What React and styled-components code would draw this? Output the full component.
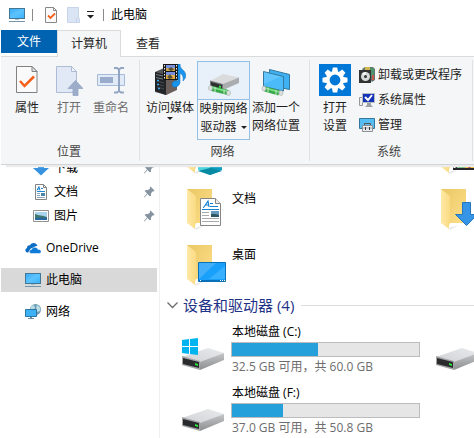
import React from 'react';
import styled, { createGlobalStyle, css } from 'styled-components';

const GlobalStyle = createGlobalStyle`
  * { box-sizing: border-box; }
  body {
    margin: 0;
    background: #fff;
    color: #000;
    font: 12px/18px "Open Sans", "Noto Sans CJK SC", sans-serif;
    overflow: hidden;
  }
  button { font: inherit; color: inherit; border: 0; background: none; padding: 0; margin: 0; }
  svg { display: block; flex: none; }
`;

/* ---------- window frame ---------- */

const Window = styled.div`
  display: flex;
  flex-direction: column;
  height: 100vh;
  padding-left: 1px;
  overflow: hidden;
`;

const TitleBar = styled.header`
  display: flex;
  align-items: center;
  flex: none;
  height: 30px;
  padding-left: 8px;
`;

const QuickButton = styled.button`
  display: flex;
  justify-content: center;
  width: ${(p) => (p.$narrow ? 12 : 22)}px;
`;

const TitleRule = styled.span`
  width: 1px;
  height: 12px;
  margin: 0 7px;
  background: #8a8a8a;
`;

const TitleText = styled.h1`
  margin: 0;
  font-size: 12px;
  font-weight: 400;
`;

const TabBar = styled.nav`
  display: flex;
  flex: none;
  height: 27px;
  margin-bottom: -1px;
  position: relative;
  z-index: 1;
`;

const Tab = styled.button`
  height: 27px;
  padding: 0 15px;
  color: #262626;
  ${(p) => p.$kind === 'file' && css`
    height: 23px;
    padding: 0 16px;
    color: #fff;
    background: #0063b1;
  `}
  ${(p) => p.$kind === 'active' && css`
    border: 1px solid #dadbdc;
    border-bottom: 0;
    background: #f5f6f7;
    padding: 0 13px;
  `}
`;

/* ---------- ribbon ---------- */

const Ribbon = styled.section`
  display: flex;
  flex: none;
  background: #f5f6f7;
  border-top: 1px solid #dadbdc;
  border-bottom: 1px solid #d2d4d6;
  padding: 3px 0;
  position: relative;
  box-shadow: 4px 3px 1px -1px #ececec;
`;

const Group = styled.div`
  display: flex;
  flex-direction: column;
  box-sizing: content-box;
  padding: 1px 7px 0 ${(p) => p.$inset}px;
  border-right: 1px solid #e0e2e3;
`;

const GroupBody = styled.div`
  display: flex;
  align-items: flex-start;
  height: 82px;
`;

const GroupTitle = styled.div`
  text-align: center;
  color: #444;
`;

const BigButton = styled.button`
  display: flex;
  flex-direction: column;
  align-items: center;
  width: ${(p) => p.$width}px;
  padding-top: 3px;
  color: #1e1e1e;
  white-space: nowrap;
  &:disabled { color: #6d6d6d; }
`;

const Split = styled.div`
  display: flex;
  flex-direction: column;
  width: 53px;
  height: 79px;
  border: 1px solid #92c0e8;
`;

const SplitTop = styled.button`
  display: flex;
  justify-content: center;
  height: 38px;
  padding-top: 2px;
  background: #e8f1fa;
  border-bottom: 1px solid #92c0e8;
`;

const SplitLabel = styled.button`
  display: flex;
  flex-direction: column;
  align-items: center;
  justify-content: flex-start;
  flex: 1;
  white-space: nowrap;
  color: #1e1e1e;
`;

const LabelLine = styled.span`
  display: flex;
  align-items: center;
  gap: 4px;
`;

const Label = styled.span`
  display: block;
  margin-top: 3px;
`;

const MenuArrow = styled.span`
  border: 3px solid transparent;
  border-top-color: #1e1e1e;
  border-bottom: 0;
`;

const SmallList = styled.div`
  display: flex;
  flex-direction: column;
  gap: 7px;
  padding: 5px 3px 0 2px;
`;

const SmallButton = styled.button`
  display: flex;
  align-items: center;
  gap: 3px;
  color: #1e1e1e;
  white-space: nowrap;
`;

/* ---------- explorer ---------- */

const Explorer = styled.div`
  display: flex;
  flex: 1;
  min-height: 0;
  overflow: hidden;
`;

const Sidebar = styled.nav`
  flex: none;
  width: 159px;
  margin-top: -9px;
  border-right: 1px solid #f0f0f0;
`;

const NavGroup = styled.div`
  margin-bottom: 8px;
`;

const NavLink = styled.a`
  display: flex;
  align-items: center;
  gap: 5px;
  height: 24px;
  margin-right: 2px;
  padding: 0 2px 0 ${(p) => (p.$nested ? 32 : 24)}px;
  color: #000;
  text-decoration: none;
  background: ${(p) => (p.$selected ? '#d9d9d9' : 'transparent')};
`;

const NavText = styled.span`
  flex: 1;
`;

const Main = styled.main`
  flex: 1;
  min-width: 0;
  margin-top: -40px;
  overflow: hidden;
`;

const Tiles = styled.div`
  display: grid;
  grid-template-columns: repeat(2, 254px);
  padding-left: 23px;
`;

const Folder = styled.div`
  display: flex;
  height: 56px;
  padding-top: 4px;
  gap: 1px;
`;

const FolderName = styled.span`
  padding-top: 5px;
`;

const SectionHead = styled.h2`
  display: flex;
  align-items: center;
  gap: 5px;
  height: 26px;
  margin: 0;
  padding: 0 0 2px 7px;
  color: #1e3287;
  font-size: 15px;
  font-weight: 400;
  line-height: 24px;
  white-space: nowrap;
  &::after {
    content: '';
    flex: 1;
    height: 1px;
    margin-left: 2px;
    background: #dedede;
  }
`;

const Drive = styled.div`
  display: flex;
  height: 61px;
  padding-top: 4px;
  margin-left: -3px;
`;

const DriveInfo = styled.div`
  width: 189px;
  margin-left: 5px;
`;

const DriveName = styled.div`
  padding-left: 1px;
`;

const Meter = styled.div`
  height: 15px;
  margin: 1px 0;
  border: 1px solid #bcbcbc;
  background: #e6e6e6;
`;

const MeterFill = styled.div`
  height: 100%;
  background: #26a0da;
`;

const DriveSpace = styled.div`
  padding-left: 1px;
  color: #6d6d6d;
  white-space: nowrap;
`;

/* ---------- icons ---------- */

const MonitorIcon = () => (
  <svg width="16" height="16" viewBox="0 0 16 16">
    <defs>
      <linearGradient id="screen" x1="0" y1="0" x2="1" y2="1">
        <stop offset="0" stopColor="#3aa9f5" />
        <stop offset=".5" stopColor="#5cc4ff" />
        <stop offset="1" stopColor="#38b0fb" />
      </linearGradient>
    </defs>
    <rect x=".5" y="1.5" width="15" height="10" fill="url(#screen)" stroke="#427796" />
    <path d="M6 12h4v1H6z" fill="#a9c0cc" />
    <path d="M0 14h16v1H0z" fill="#7595a8" />
  </svg>
);

const CheckDocIcon = () => (
  <svg width="22" height="32" viewBox="0 0 22 32">
    <path d="M.5 2.500h15.500l5 5v21H.5z" fill="#fafafa" stroke="#818181" />
    <path d="M16 2.500v5h5z" fill="#e4e4e4" stroke="#818181" />
    <path d="M4 17l4.500 5L18 12.500" fill="none" stroke="#f4601a" strokeWidth="2.500" />
  </svg>
);

const SmallCheckIcon = () => (
  <svg width="12" height="16" viewBox="0 0 12 16">
    <path d="M.5.5h8l3 3v12H.5z" fill="#fafafa" stroke="#888" />
    <path d="M8.500.5v3h3" fill="none" stroke="#888" />
    <path d="M3 8.500l2.500 2.500L10 6.500" fill="none" stroke="#f4601a" strokeWidth="1.800" />
  </svg>
);

const SmallBlankIcon = () => (
  <svg width="13" height="16" viewBox="0 0 13 16">
    <path d="M.5.5h11v10l1 1v4H.5z" fill="#d9e4f5" stroke="#c8d4e9" />
    <path d="M9.500 15v-4h2" fill="none" stroke="#c8d4e9" />
  </svg>
);

const CustomizeIcon = () => (
  <svg width="7" height="8" viewBox="0 0 7 8">
    <path d="M0 0h7v1H0zM0 4h7L3.500 7.500z" fill="#222" />
  </svg>
);

const OpenIcon = () => (
  <svg width="28" height="32" viewBox="0 0 28 32">
    <path d="M1.500 2.500h15l5 5v21h-20z" fill="#e1e9f6" stroke="#adbbd4" />
    <path d="M16.500 2.500v5h5z" fill="#f2f5fa" stroke="#adbbd4" />
    <path d="M20.500 16.500l7.500 8h-5v7h-5v-7h-5z" fill="#9dadc9" stroke="#8e9fbe" strokeWidth=".7" />
  </svg>
);

const RenameIcon = () => (
  <svg width="28" height="32" viewBox="0 0 28 32">
    <path d="M.5 10.500h27v11H.5z" fill="#e1ebf8" stroke="#a7bad8" />
    <path d="M3 13h13v6H3z" fill="#9aaccb" />
    <path d="M17 4h3l2 1.500L24 4h3M17 28.500h3l2-1.500 2 1.500h3M22 5v23" fill="none" stroke="#92a5c3" strokeWidth="2" />
  </svg>
);

const MediaIcon = () => (
  <svg width="32" height="32" viewBox="0 0 32 32">
    <path d="M1 8l9-4 13 3v18l-11 6-11-3z" fill="#55575a" />
    <path d="M12 11l11-3v18l-11 5z" fill="#6b605c" />
    <path d="M1 8l11 3v20L1 27z" fill="#222528" />
    <path d="M2 10.500l9 2M2 13.500l9 2" stroke="#777d82" strokeWidth="1" />
    <path d="M3 17l7 2M3 20l7 2M3 23l7 2" stroke="#45494d" />
    <path d="M3 16.500h2M3 20.500h2M4 24.500h2" stroke="#3ba8f0" strokeWidth="1.500" />
    <path d="M9 0h15v16H9z" fill="#171717" />
    <path d="M12 1h9v6h-9z" fill="#c9a552" />
    <path d="M12 8h9v7h-9z" fill="#e8ae42" />
    <path d="M12 1h9v3h-9zM12 8h9v3h-9z" fill="#7a91df" />
    <path d="M14 5l3-2 3 2.500-3 1.500zM13 13l3-3 3 4-4 1z" fill="#55513b" />
    <path d="M10.500 1v14M22.500 1v14" stroke="#eee" strokeDasharray="1.500 1.500" />
    <path d="M24 0h2c0 4 2 5 4 7 3 4 2 7-1 10 .5-4 0-6-3-8v9c0 5-7 7-8 3-.5-3 3-5 6-4z" fill="#1b94ed" stroke="#0870bf" strokeWidth=".5" />
  </svg>
);

const MapDriveIcon = () => (
  <svg width="32" height="32" viewBox="0 0 32 32">
    <path d="M2 17l13-7 16 3.500-15 7z" fill="#dadbdd" />
    <path d="M15 20l16-6.500v5.500l-16 7z" fill="#aaacae" />
    <path d="M2 16.500l13 3.500v6L2 22z" fill="#77797b" />
    <path d="M3 18l11 3v4L3 21.500z" fill="#2d2f30" />
    <path d="M11 21.500l2 .5v2l-2-.5z" fill="#3fe34e" />
    <path d="M4 24.500l16 4" stroke="#3aa94a" strokeWidth="5" />
    <path d="M4 23.500l16 4" stroke="#7be488" strokeWidth="1.500" />
    <path d="M7 23v5M16 25.500v5" stroke="#c9e5cd" strokeWidth="1" />
    <ellipse cx="2.500" cy="24" rx="2" ry="2.500" fill="#dce1de" stroke="#9aa39e" strokeWidth=".5" />
    <ellipse cx="20.500" cy="29" rx="2" ry="2.500" fill="#dce1de" stroke="#9aa39e" strokeWidth=".5" />
  </svg>
);

const AddPlaceIcon = () => (
  <svg width="30" height="32" viewBox="0 0 30 32">
    <path d="M8.500 5.500l20 5v15l-20-4z" fill="#3fb0f2" stroke="#34799d" />
    <path d="M2.500 7.500l20 5v14.500l-20-4.500z" fill="#4bbbfa" stroke="#34799d" />
    <path d="M3 8.300l17 4.200L3 20z" fill="#79d0ff" opacity=".5" />
    <path d="M4 25l14 4" stroke="#3aa94a" strokeWidth="5" />
    <path d="M4 24l14 4" stroke="#7be488" strokeWidth="1.500" />
    <path d="M7 23.500v5M15 26v5" stroke="#c9e5cd" />
    <ellipse cx="3" cy="24.500" rx="2" ry="2.500" fill="#dce1de" stroke="#9aa39e" strokeWidth=".5" />
    <ellipse cx="20" cy="29" rx="2" ry="2.500" fill="#dce1de" stroke="#9aa39e" strokeWidth=".5" />
  </svg>
);

const teeth = [0, 45, 90, 135, 180, 225, 270, 315];

const GearIcon = () => (
  <svg width="32" height="32" viewBox="0 0 32 32">
    <path d="M0 0h32v32H0z" fill="#0078d7" />
    <g fill="#fff">
      {teeth.map((angle) => (
        <path key={angle} d="M13.800 3.500h4.400l1 5h-6.400z" transform={`rotate(${angle} 16 16)`} />
      ))}
    </g>
    <circle cx="16" cy="16" r="7.200" fill="none" stroke="#fff" strokeWidth="3.600" />
  </svg>
);

const UninstallIcon = () => (
  <svg width="16" height="18" viewBox="0 0 16 18">
    <path d="M3 3l3-2h8l2 2v11l-3 2z" fill="#63746d" />
    <path d="M6 1h5v3H6z" fill="#d0b64f" />
    <path d="M11 2h4v8h-3z" fill="#4d936b" />
    <path d="M13 9h2v5h-2z" fill="#c35b4b" />
    <path d="M0 4h12v13H0z" fill="#333" />
    <circle cx="6.500" cy="10.500" r="4.500" fill="#d7dad9" />
    <path d="M6 10l-3-3 4-1z" fill="#fff" />
    <circle cx="6.500" cy="10.500" r="1.500" fill="#333" />
  </svg>
);

const SystemIcon = () => (
  <svg width="16" height="18" viewBox="0 0 16 18">
    <path d="M.5 6.500h3v8h-3z" fill="#eee" stroke="#92979a" />
    <path d="M3.500 2.500h12v9h-12z" fill="#1533b9" stroke="#b7bcc2" />
    <path d="M6 6l3 3 4-5" fill="none" stroke="#fff" strokeWidth="2" />
    <path d="M8 12h4v2l2 2H6l2-2z" fill="#9ba0a4" />
  </svg>
);

const ManageIcon = () => (
  <svg width="16" height="18" viewBox="0 0 16 18">
    <path d="M.5 2.500h15v10H.5z" fill="#56bdf3" stroke="#34779d" />
    <path d="M5.500 9V7.500h6V9" fill="none" stroke="#555" />
    <path d="M3.500 9.500h10v6h-10z" fill="#ebedee" stroke="#8b9194" />
    <path d="M4 12h9" stroke="#a2a7aa" />
    <path d="M6 11h1v3H6zM10 11h1v3h-1z" fill="#34383a" />
  </svg>
);

const PinIcon = () => (
  <svg width="11" height="12" viewBox="0 0 11 12">
    <path d="M6.500.500l4 4-1 1H8.500L7 7.500v2l-1 1L3.500 8 .5 11.500 0 11l3-3.500L.800 5l1-1h2.200L6 2.500V1z" fill="#8594a0" />
  </svg>
);

const DownloadIcon = () => (
  <svg width="16" height="16" viewBox="0 0 16 16">
    <path d="M5 0h6v8h5l-8 7.500L0 8h5z" fill="#3793df" />
  </svg>
);

const DocumentIcon = () => (
  <svg width="16" height="16" viewBox="0 0 16 16">
    <path d="M2.500.5h8l3 3v12h-11z" fill="#fff" stroke="#848484" />
    <path d="M10.500.5v3h3" fill="none" stroke="#848484" />
    <path d="M4 6.500L6 2.500l1 4M4.500 5H7M8 4.500h2M4 7.500h8" stroke="#1f87d0" fill="none" />
    <path d="M4 9.500h3M4 11.500h3M4 13.500h8" stroke="#8fa7ba" />
    <path d="M8 9h4v3H8z" fill="#4a86a9" />
  </svg>
);

const PictureIcon = () => (
  <svg width="16" height="16" viewBox="0 0 16 16">
    <path d="M.5 2.500h15v11H.5z" fill="#fff" stroke="#929292" />
    <path d="M2 4h12v5H2z" fill="#a8d4ee" />
    <path d="M2 6c4 2 7 1 12 3v3H2z" fill="#42776b" />
    <path d="M2 10c5-1 8 0 12-.5V12H2z" fill="#2769a0" />
  </svg>
);

const CloudIcon = () => (
  <svg width="16" height="16" viewBox="0 0 16 16">
    <path d="M3 12.500C0 12.500-.7 9 2 8c0-2 1.500-3 3-2.500 1.500-3.500 6.500-3 7.500.5-2 0-3 .5-4 2C6 7.500 4.500 9 4.500 11z" fill="#0b6cc4" />
    <path d="M6 13.500c-2.500-.5-2-4 .5-4 1-3 5.500-3 6.500 0 4-.5 4 4 1 4z" fill="#0f7bd8" stroke="#fff" strokeWidth=".5" />
  </svg>
);

const NetworkIcon = () => (
  <svg width="16" height="16" viewBox="0 0 16 16">
    <circle cx="10.500" cy="5.500" r="5.500" fill="#6b9cb4" />
    <path d="M6 2c3-2 4 0 4 2L7 7H5zM12 1c3 1 4 4 3 6l-3 1-1-4z" fill="#b9dbe3" />
    <path d="M.5 5.500h11v7H.5z" fill="#3cb2f5" stroke="#2a76a5" />
    <path d="M5 13h2v1h2v1H3v-1h2z" fill="#6b91a5" />
  </svg>
);

const badges = {
  objects: (
    <g>
      <path d="M15 25l12-5 12 5v14l-12 7-12-7z" fill="#19b4ca" />
      <path d="M15 30l12 8v8l-12-5z" fill="#52d4dc" />
      <path d="M27 38l12-5v8l-12 5z" fill="#0c9dc0" />
      <path d="M15 42l12-3 12 3-12 4z" fill="#078ba4" />
    </g>
  ),
  documents: (
    <g>
      <path d="M17.500 13.500h15l5 5v22h-20z" fill="#fff" stroke="#858585" />
      <path d="M32.500 13.500v5h5" fill="#eee" stroke="#858585" />
      <path d="M20 22.500h1M21 22l4-6 1 6M22 20h4M27 18.500h3M27 21.500h8M19 24.500h17" stroke="#1682d2" strokeWidth="1.200" fill="none" />
      <path d="M19 27.500h7M19 30.500h7M19 33.500h17M19 36.500h17" stroke="#aaa" />
      <path d="M28 26h8v6h-8z" fill="#6799bd" />
      <path d="M28 29l4 0 4 1v2h-8z" fill="#2d5663" />
    </g>
  ),
  desktop: (
    <g>
      <path d="M15.500 21.500h27v19h-27z" fill="#18a0fb" stroke="#0872b9" />
      <path d="M16 22h17L16 38z" fill="#43aff9" />
      <path d="M42 25v13H26z" fill="#37b0ff" />
      <path d="M16 39h26v2H16z" fill="#0871b9" />
      <path d="M17 39.500h1M37 39.500h5" stroke="#fff" strokeDasharray="1 1" />
    </g>
  ),
  videos: (
    <g>
      <path d="M16 20h32v21H16z" fill="#26272b" />
      <path d="M20 22h28v17H20z" fill="#3976bf" />
      <path d="M20 36l6-1 4 4H20z" fill="#73bd78" />
      <path d="M29 35l3 4h-4zM35 34l3 5h-5zM40 34l4 5h-5z" fill="#f1bd35" />
      <path d="M31 36l2 3M37 35l2 4" stroke="#ba342c" strokeWidth="2" />
      <path d="M17.500 21v19" stroke="#fff" strokeDasharray="2 2" strokeWidth="2" />
    </g>
  ),
  downloads: (
    <path d="M25.500 17.500h8v12h7L29.500 40.500l-11-11h7z" fill="#3695e6" stroke="#2377be" />
  ),
};

const FolderIcon = ({ badge }) => (
  <svg width="48" height="48" viewBox="0 0 48 48">
    <defs>
      <linearGradient id="back" x1="0" y1="0" x2="1" y2="1">
        <stop offset="0" stopColor="#e9c765" />
        <stop offset="1" stopColor="#ffe08a" />
      </linearGradient>
      <linearGradient id="flap">
        <stop offset="0" stopColor="#ffe9a6" />
        <stop offset="1" stopColor="#fadb83" />
      </linearGradient>
    </defs>
    <path d="M12 43l10-3-9 5z" fill="#e8e8e8" />
    <path d="M4 4h25v34H4z" fill="url(#back)" />
    <path d="M4 4l9 7v28l-1 1v4l-8-6z" fill="url(#flap)" />
    {badges[badge]}
  </svg>
);

const DriveIcon = ({ windows }) => (
  <svg width="46" height="48" viewBox="0 0 46 48">
    <defs>
      <linearGradient id="driveTop" x1="0" y1="1" x2="1" y2="0">
        <stop offset="0" stopColor="#d0d1d4" />
        <stop offset="1" stopColor="#e9eaec" />
      </linearGradient>
      <linearGradient id="driveSide" x1="0" y1="0" x2="0" y2="1">
        <stop offset="0" stopColor="#c5c6c8" />
        <stop offset="1" stopColor="#8c8e90" />
      </linearGradient>
    </defs>
    <path d="M2 34l26-9 16 5-24 10z" fill="url(#driveTop)" />
    <path d="M20 39l24-9v7L20 47z" fill="url(#driveSide)" />
    <path d="M2 33l18 5v9L2 42z" fill="#a4a5a7" />
    <path d="M3 35l16 4v6L3 41z" fill="#292b2c" />
    <path d="M15 40l3 1v2l-3-1z" fill="#2de43d" />
    {windows && (
      <path d="M2 17l7-1v7H2zM10 16l8-1v8h-8zM2 24h7v7l-7-1zM10 24h8v8l-8-1z" fill="#00b4f0" />
    )}
  </svg>
);

const ChevronIcon = () => (
  <svg width="11" height="8" viewBox="0 0 11 8">
    <path d="M.5 1.500l5 5 5-5" fill="none" stroke="#6b6b6b" strokeWidth="1.300" />
  </svg>
);

/* ---------- content ---------- */

const pinned = [
  { name: '下载', Icon: DownloadIcon },
  { name: '文档', Icon: DocumentIcon },
  { name: '图片', Icon: PictureIcon },
];

const roots = [
  { name: 'OneDrive', Icon: CloudIcon },
  { name: '此电脑', Icon: MonitorIcon, selected: true },
  { name: '网络', Icon: NetworkIcon },
];

const folders = [
  { badge: 'objects' },
  { badge: 'videos' },
  { badge: 'documents', name: '文档' },
  { badge: 'downloads' },
  { badge: 'desktop', name: '桌面' },
];

const drives = [
  { name: '本地磁盘 (C:)', free: '32.5', total: '60.0', windows: true },
  {},
  { name: '本地磁盘 (F:)', free: '37.0', total: '50.8' },
];

const systemTools = [
  { name: '卸载或更改程序', Icon: UninstallIcon },
  { name: '系统属性', Icon: SystemIcon },
  { name: '管理', Icon: ManageIcon },
];

export default function App() {
  return (
    <Window>
      <GlobalStyle />
      <TitleBar>
        <MonitorIcon />
        <TitleRule />
        <QuickButton aria-label="属性"><SmallCheckIcon /></QuickButton>
        <QuickButton aria-label="新建"><SmallBlankIcon /></QuickButton>
        <QuickButton $narrow aria-label="自定义"><CustomizeIcon /></QuickButton>
        <TitleRule />
        <TitleText>此电脑</TitleText>
      </TitleBar>

      <TabBar>
        <Tab $kind="file">文件</Tab>
        <Tab $kind="active">计算机</Tab>
        <Tab>查看</Tab>
      </TabBar>

      <Ribbon>
        <Group $inset={5}>
          <GroupBody>
            <BigButton $width={42}><CheckDocIcon /><Label>属性</Label></BigButton>
            <BigButton $width={42} disabled><OpenIcon /><Label>打开</Label></BigButton>
            <BigButton $width={42} disabled><RenameIcon /><Label>重命名</Label></BigButton>
          </GroupBody>
          <GroupTitle>位置</GroupTitle>
        </Group>
        <Group $inset={3}>
          <GroupBody>
            <BigButton $width={54}>
              <MediaIcon />
              <Label>访问媒体</Label>
              <MenuArrow />
            </BigButton>
            <Split>
              <SplitTop aria-label="映射网络驱动器"><MapDriveIcon /></SplitTop>
              <SplitLabel>
                <LabelLine>映射网络</LabelLine>
                <LabelLine>驱动器<MenuArrow /></LabelLine>
              </SplitLabel>
            </Split>
            <BigButton $width={52}>
              <AddPlaceIcon />
              <Label>添加一个<br />网络位置</Label>
            </BigButton>
          </GroupBody>
          <GroupTitle>网络</GroupTitle>
        </Group>
        <Group $inset={3}>
          <GroupBody>
            <BigButton $width={44}>
              <GearIcon />
              <Label>打开<br />设置</Label>
            </BigButton>
            <SmallList>
              {systemTools.map(({ name, Icon }) => (
                <SmallButton key={name}><Icon />{name}</SmallButton>
              ))}
            </SmallList>
          </GroupBody>
          <GroupTitle>系统</GroupTitle>
        </Group>
      </Ribbon>

      <Explorer>
        <Sidebar>
          <NavGroup>
            {pinned.map(({ name, Icon }) => (
              <NavLink key={name} href="#" $nested>
                <Icon /><NavText>{name}</NavText><PinIcon />
              </NavLink>
            ))}
          </NavGroup>
          {roots.map(({ name, Icon, selected }) => (
            <NavGroup key={name}>
              <NavLink href="#" $selected={selected}>
                <Icon /><NavText>{name}</NavText>
              </NavLink>
            </NavGroup>
          ))}
        </Sidebar>

        <Main>
          <Tiles>
            {folders.map(({ badge, name }) => (
              <Folder key={badge}>
                <FolderIcon badge={badge} />
                {name && <FolderName>{name}</FolderName>}
              </Folder>
            ))}
          </Tiles>
          <SectionHead><ChevronIcon />设备和驱动器 (4)</SectionHead>
          <Tiles>
            {drives.map(({ name, free, total, windows }, i) => (
              <Drive key={i}>
                <DriveIcon windows={windows} />
                {name && (
                  <DriveInfo>
                    <DriveName>{name}</DriveName>
                    <Meter role="meter" aria-label={name} aria-valuemin={0} aria-valuemax={Number(total)} aria-valuenow={total - free}>
                      <MeterFill style={{ width: `${(1 - free / total) * 100}%` }} />
                    </Meter>
                    <DriveSpace>{free} GB 可用，共 {total} GB</DriveSpace>
                  </DriveInfo>
                )}
              </Drive>
            ))}
          </Tiles>
        </Main>
      </Explorer>
    </Window>
  );
}
